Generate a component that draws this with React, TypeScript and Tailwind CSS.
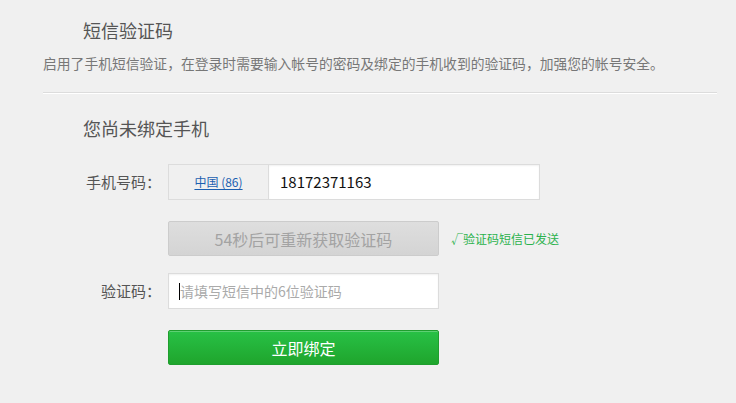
export default function App() {
  const font = { fontFamily: '"Noto Sans CJK SC", "Noto Sans", sans-serif' };

  return (
    <main
      className="w-[736px] h-[403px] bg-[#f0f0f0] pl-[43px] pr-[19px] pt-[18px] overflow-hidden"
      style={font}
    >
      <h2 className="ml-10 h-6 leading-6 text-[18px] text-[#555]">短信验证码</h2>
      <p className="mt-[11px] h-5 leading-5 text-[13.8px] text-[#777] whitespace-nowrap">
        启用了手机短信验证，在登录时需要输入帐号的密码及绑定的手机收到的验证码，加强您的帐号安全。
      </p>
      <div className="mt-[19px] border-t border-t-[#dcdcdc] border-b border-b-white"></div>

      <section className="ml-10">
        <h3 className="mt-[22px] h-6 leading-6 text-[18px] text-[#555]">您尚未绑定手机</h3>

        <div className="mt-6 flex items-center">
          <label className="w-[85px] pr-[7px] text-right text-[15px] text-[#555]">手机号码：</label>
          <div className="flex h-9 w-[372px]">
            <div className="w-[101px] flex items-center justify-center border border-[#dcdcdc] bg-[#f0f0f0]">
              <a href="#" className="text-[12px] text-[#1c5fb0] underline underline-offset-2">
                中国 (86)
              </a>
            </div>
            <div className="flex-1 flex items-center border border-l-0 border-[#dcdcdc] bg-white pl-[11px] text-[15px] text-[#111] shadow-[inset_0_1px_2px_rgba(0,0,0,0.06)]">
              18172371163
            </div>
          </div>
        </div>

        <div className="mt-[21px] flex items-center">
          <div className="w-[85px]"></div>
          <button className="h-[35px] w-[271px] rounded-[2px] border border-[#cccccc] bg-gradient-to-b from-[#dedede] to-[#d4d4d4] text-[16px] text-[#a3a3a3]">
            54秒后可重新获取验证码
          </button>
          <span className="ml-3 text-[12px] text-[#2bb24c]">√验证码短信已发送</span>
        </div>

        <div className="mt-[17px] flex items-center">
          <label className="w-[85px] pr-[7px] text-right text-[15px] text-[#555]">验证码：</label>
          <div className="h-9 w-[271px] flex items-center border border-[#dcdcdc] bg-white pl-[10px] text-[14px] text-[#aaa] shadow-[inset_0_1px_2px_rgba(0,0,0,0.06)]">
            <span className="inline-block w-px h-[17px] bg-black"></span>
            请填写短信中的6位验证码
          </div>
        </div>

        <div className="mt-[21px] flex items-center">
          <div className="w-[85px]"></div>
          <button className="h-[35px] w-[271px] rounded-[2px] border border-[#1f9e2e] bg-gradient-to-b from-[#28c146] to-[#1fa52c] text-[16px] text-white shadow-[inset_0_1px_0_rgba(255,255,255,0.25)]">
            立即绑定
          </button>
        </div>
      </section>
    </main>
  );
}
